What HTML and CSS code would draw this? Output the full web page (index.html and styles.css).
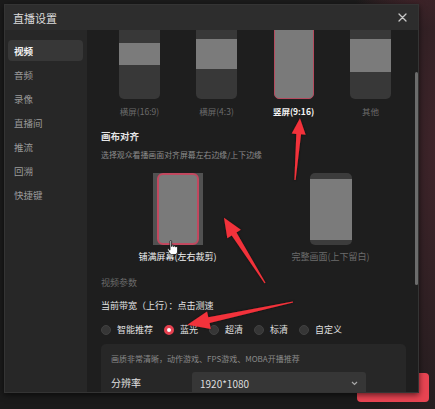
FILE: index.html
```html
<!DOCTYPE html>
<html lang="zh-CN">
<head>
<meta charset="utf-8">
<title>直播设置</title>
<link rel="stylesheet" href="styles.css">
</head>
<body>
<div class="red-btn"></div>
<div class="dialog">
  <div class="titlebar">
    <span class="title">直播设置</span>
    <svg class="close" width="9" height="9" viewBox="0 0 9 9"><path d="M1 1L8 8M8 1L1 8" stroke="#c8c8c8" stroke-width="1.3" stroke-linecap="round"/></svg>
  </div>
  <div class="body">
    <nav class="sidebar">
      <div class="nav-item active">视频</div>
      <div class="nav-item">音频</div>
      <div class="nav-item">录像</div>
      <div class="nav-item">直播间</div>
      <div class="nav-item">推流</div>
      <div class="nav-item">回溯</div>
      <div class="nav-item">快捷键</div>
    </nav>
    <main class="content">
      <div class="scroll">
        <div class="ratios">
          <div class="ratio">
            <div class="frame"><div class="band band-169"></div></div>
            <div class="rlabel">横屏(16:9)</div>
          </div>
          <div class="ratio">
            <div class="frame"><div class="band band-43"></div></div>
            <div class="rlabel">横屏(4:3)</div>
          </div>
          <div class="ratio">
            <div class="frame frame-sel"></div>
            <div class="rlabel rlabel-sel">竖屏(9:16)</div>
          </div>
          <div class="ratio">
            <div class="frame"><div class="band band-other"></div></div>
            <div class="rlabel">其他</div>
          </div>
        </div>

        <div class="section-title">画布对齐</div>
        <div class="hint">选择观众看播画面对齐屏幕左右边缘/上下边缘</div>

        <div class="aligns">
          <div class="align">
            <div class="fill-outer"><div class="fill-inner"></div></div>
            <div class="alabel alabel-sel">铺满屏幕(左右裁剪)</div>
          </div>
          <div class="align">
            <div class="fit-phone"><div class="fit-screen"></div></div>
            <div class="alabel">完整画面(上下留白)</div>
          </div>
        </div>

        <div class="section-sub">视频参数</div>
        <div class="bandwidth">当前带宽（上行）：点击测速</div>

        <div class="radios">
          <span class="radio"></span><span class="rtext">智能推荐</span>
          <span class="radio radio-on"></span><span class="rtext">蓝光</span>
          <span class="radio"></span><span class="rtext">超清</span>
          <span class="radio"></span><span class="rtext">标清</span>
          <span class="radio"></span><span class="rtext">自定义</span>
        </div>

        <div class="panel">
          <div class="panel-hint">画质非常清晰，动作游戏、FPS游戏、MOBA开播推荐</div>
          <div class="field">
            <span class="field-label">分辨率</span>
            <div class="select">
              <span>1920*1080</span>
              <svg width="7" height="5" viewBox="0 0 7 5"><path d="M1 1L3.5 3.5L6 1" fill="none" stroke="#a8a8a8" stroke-width="1.2"/></svg>
            </div>
          </div>
        </div>
      </div>
      <div class="scrollbar"></div>
    </main>
  </div>
</div>

<svg class="annot" width="435" height="409" viewBox="0 0 435 409">
  <defs>
    <filter id="sh" x="-20%" y="-20%" width="140%" height="140%">
      <feDropShadow dx="0" dy="0" stdDeviation="0.8" flood-color="#000" flood-opacity="0.6"/>
    </filter>
  </defs>
  <g fill="#f2323a" filter="url(#sh)">
    <polygon transform="translate(295 180) rotate(-85.4)" points="0,-0.6 46,-2.4 46,-7 62,0 46,7 46,2.4 0,0.6"/>
    <polygon transform="translate(265 283) rotate(-122.2)" points="0,-0.6 58,-2.8 58,-8 77,0 58,8 58,2.8 0,0.6"/>
    <polygon transform="translate(293 302) rotate(167.8)" points="0,-0.6 86,-3 86,-9 108,0 86,9 86,3 0,0.6"/>
  </g>
</svg>

<svg class="cursor" width="12" height="16" viewBox="0 0 12 16">
  <path d="M3,1.2 C3,0.3 4.6,0.3 4.6,1.2 L4.6,6.4 L5.1,6.4 L5.1,5.4 C5.1,4.6 6.6,4.6 6.6,5.4 L6.6,6.6 L7.1,6.6 L7.1,6 C7.1,5.2 8.6,5.2 8.6,6 L8.6,7 L9.1,7 C9.1,6.3 10.6,6.3 10.6,7 L10.6,11 C10.6,13 9.6,14.6 8,14.6 L4.6,14.6 C3.6,14.6 3,13.6 2.1,12.4 L0.7,10 C0.3,9.2 1.3,8.5 1.9,9.1 L3,10.2 Z" fill="#fff" stroke="#111" stroke-width="0.8" stroke-linejoin="round"/>
</svg>
</body>
</html>
```

FILE: styles.css
```css
* {
  box-sizing: border-box;
}

html, body {
  margin: 0;
  padding: 0;
}

body {
  width: 435px;
  height: 409px;
  overflow: hidden;
  position: relative;
  font-family: "Noto Sans CJK SC", "Noto Sans", sans-serif;
  background:
    radial-gradient(ellipse 90px 360px at 440px 150px, #40242a 0%, #35202400 100%),
    radial-gradient(ellipse 60px 30px at 415px 0px, #3a2226 0%, #3a222600 100%),
    #1b1b1b;
}

.red-btn {
  position: absolute;
  left: 357px;
  top: 373px;
  width: 72px;
  height: 29px;
  border-radius: 4px;
  background: #e84452;
}

.dialog {
  position: relative;
  z-index: 1;
  margin: 4px 0 0 4px;
  width: 415px;
  height: 389px;
  display: flex;
  flex-direction: column;
  background: #1e1e1e;
  border: 1px solid #343434;
  box-shadow: 0 2px 6px rgba(0, 0, 0, 0.6);
  overflow: hidden;
}

.titlebar {
  height: 25px;
  flex: none;
  display: flex;
  align-items: center;
  justify-content: space-between;
  padding: 0 8px 0 8px;
  background: #2d2d2d;
}

.title {
  font-size: 11px;
  line-height: 14px;
  color: #dcdcdc;
}

.close {
  display: block;
  margin-right: 3px;
}

.body {
  flex: 1;
  display: flex;
  min-height: 0;
}

.sidebar {
  width: 82px;
  flex: none;
  background: #272727;
  padding: 10px 4px 0 3px;
}

.nav-item {
  height: 21px;
  margin-bottom: 3px;
  padding-left: 6px;
  display: flex;
  align-items: center;
  font-size: 9.5px;
  color: #9a9a9a;
  border-radius: 4px;
}

.nav-item.active {
  background: #373737;
  color: #f2f2f2;
  font-weight: 700;
}

.content {
  flex: 1;
  position: relative;
  overflow: hidden;
  background: #1e1e1e;
}

.scroll {
  margin-top: -19px;
  padding-left: 14px;
}

.ratios {
  display: flex;
}

.ratio {
  width: 77px;
  display: flex;
  flex-direction: column;
  align-items: center;
}

.frame {
  width: 41px;
  height: 88px;
  border-radius: 5px;
  background: #383838;
  overflow: hidden;
}

.band {
  background: #7b7b7b;
}

.band-169 {
  margin-top: 32px;
  height: 22px;
}

.band-43 {
  margin-top: 28px;
  height: 30px;
}

.band-other {
  margin-top: 28px;
  height: 33px;
}

.frame-sel {
  width: 40px;
  background: #7a7a7a;
  border: 1.5px solid #b54a5e;
}

.rlabel {
  margin-top: 6px;
  font-size: 8.5px;
  line-height: 12px;
  color: #6c6c6c;
  white-space: nowrap;
}

.rlabel-sel {
  color: #f4f4f4;
  font-weight: 700;
}

.section-title {
  margin-top: 13px;
  font-size: 9.5px;
  line-height: 12px;
  font-weight: 700;
  color: #e6e6e6;
}

.hint {
  margin-top: 8px;
  font-size: 7.9px;
  line-height: 10px;
  color: #8c8c8c;
  white-space: nowrap;
}

.aligns {
  margin-top: 13px;
  display: flex;
}

.align {
  width: 153px;
  display: flex;
  flex-direction: column;
  align-items: center;
}

.fill-outer {
  width: 50px;
  height: 72px;
  padding: 0 4px;
  background: #515151;
}

.fill-inner {
  width: 42px;
  height: 72px;
  border-radius: 6px;
  background: #7a7a7a;
  border: 2px solid #c2485f;
}

.fit-phone {
  width: 42px;
  height: 72px;
  border-radius: 5px;
  background: #3c3c3c;
  padding: 6px 0 5px;
}

.fit-screen {
  height: 100%;
  background: #7b7b7b;
}

.alabel {
  margin-top: 6px;
  font-size: 9px;
  line-height: 12px;
  color: #6c6c6c;
  white-space: nowrap;
}

.alabel-sel {
  color: #f0f0f0;
}

.section-sub {
  margin-top: 14px;
  font-size: 9px;
  line-height: 12px;
  color: #6a6a6a;
}

.bandwidth {
  margin-top: 11px;
  font-size: 9px;
  line-height: 12px;
  color: #e2e2e2;
}

.radios {
  margin-top: 11px;
  height: 14px;
  display: flex;
  align-items: center;
}

.radio {
  width: 10px;
  height: 10px;
  border-radius: 50%;
  background: #363636;
  border: 1px solid #414141;
  flex: none;
}

.radio-on {
  background: #ffffff;
  border: 3.4px solid #e5404f;
}

.rtext {
  margin-left: 6px;
  margin-right: 11px;
  font-size: 9px;
  line-height: 14px;
  color: #e0e0e0;
  white-space: nowrap;
}

.panel {
  margin-top: 7px;
  width: 305px;
  height: 80px;
  border-radius: 5px;
  background: #272727;
  padding: 10px 0 0 10px;
}

.panel-hint {
  font-size: 8px;
  line-height: 10px;
  color: #8a8a8a;
  white-space: nowrap;
}

.field {
  margin-top: 8px;
  display: flex;
  align-items: center;
}

.field-label {
  width: 81px;
  font-size: 10px;
  line-height: 22px;
  color: #e0e0e0;
}

.select {
  width: 174px;
  height: 22px;
  border-radius: 3px;
  background: #363636;
  display: flex;
  align-items: center;
  justify-content: space-between;
  padding: 0 8px 0 8px;
  font-size: 10px;
  color: #dedede;
}

.select svg {
  display: block;
}

.scrollbar {
  position: absolute;
  left: 328px;
  top: 42px;
  width: 3px;
  height: 213px;
  border-radius: 2px;
  background: #6c6c6c;
}

.annot {
  position: absolute;
  left: 0;
  top: 0;
  z-index: 5;
  pointer-events: none;
}

.cursor {
  position: absolute;
  left: 167px;
  top: 240px;
  z-index: 6;
}
```
